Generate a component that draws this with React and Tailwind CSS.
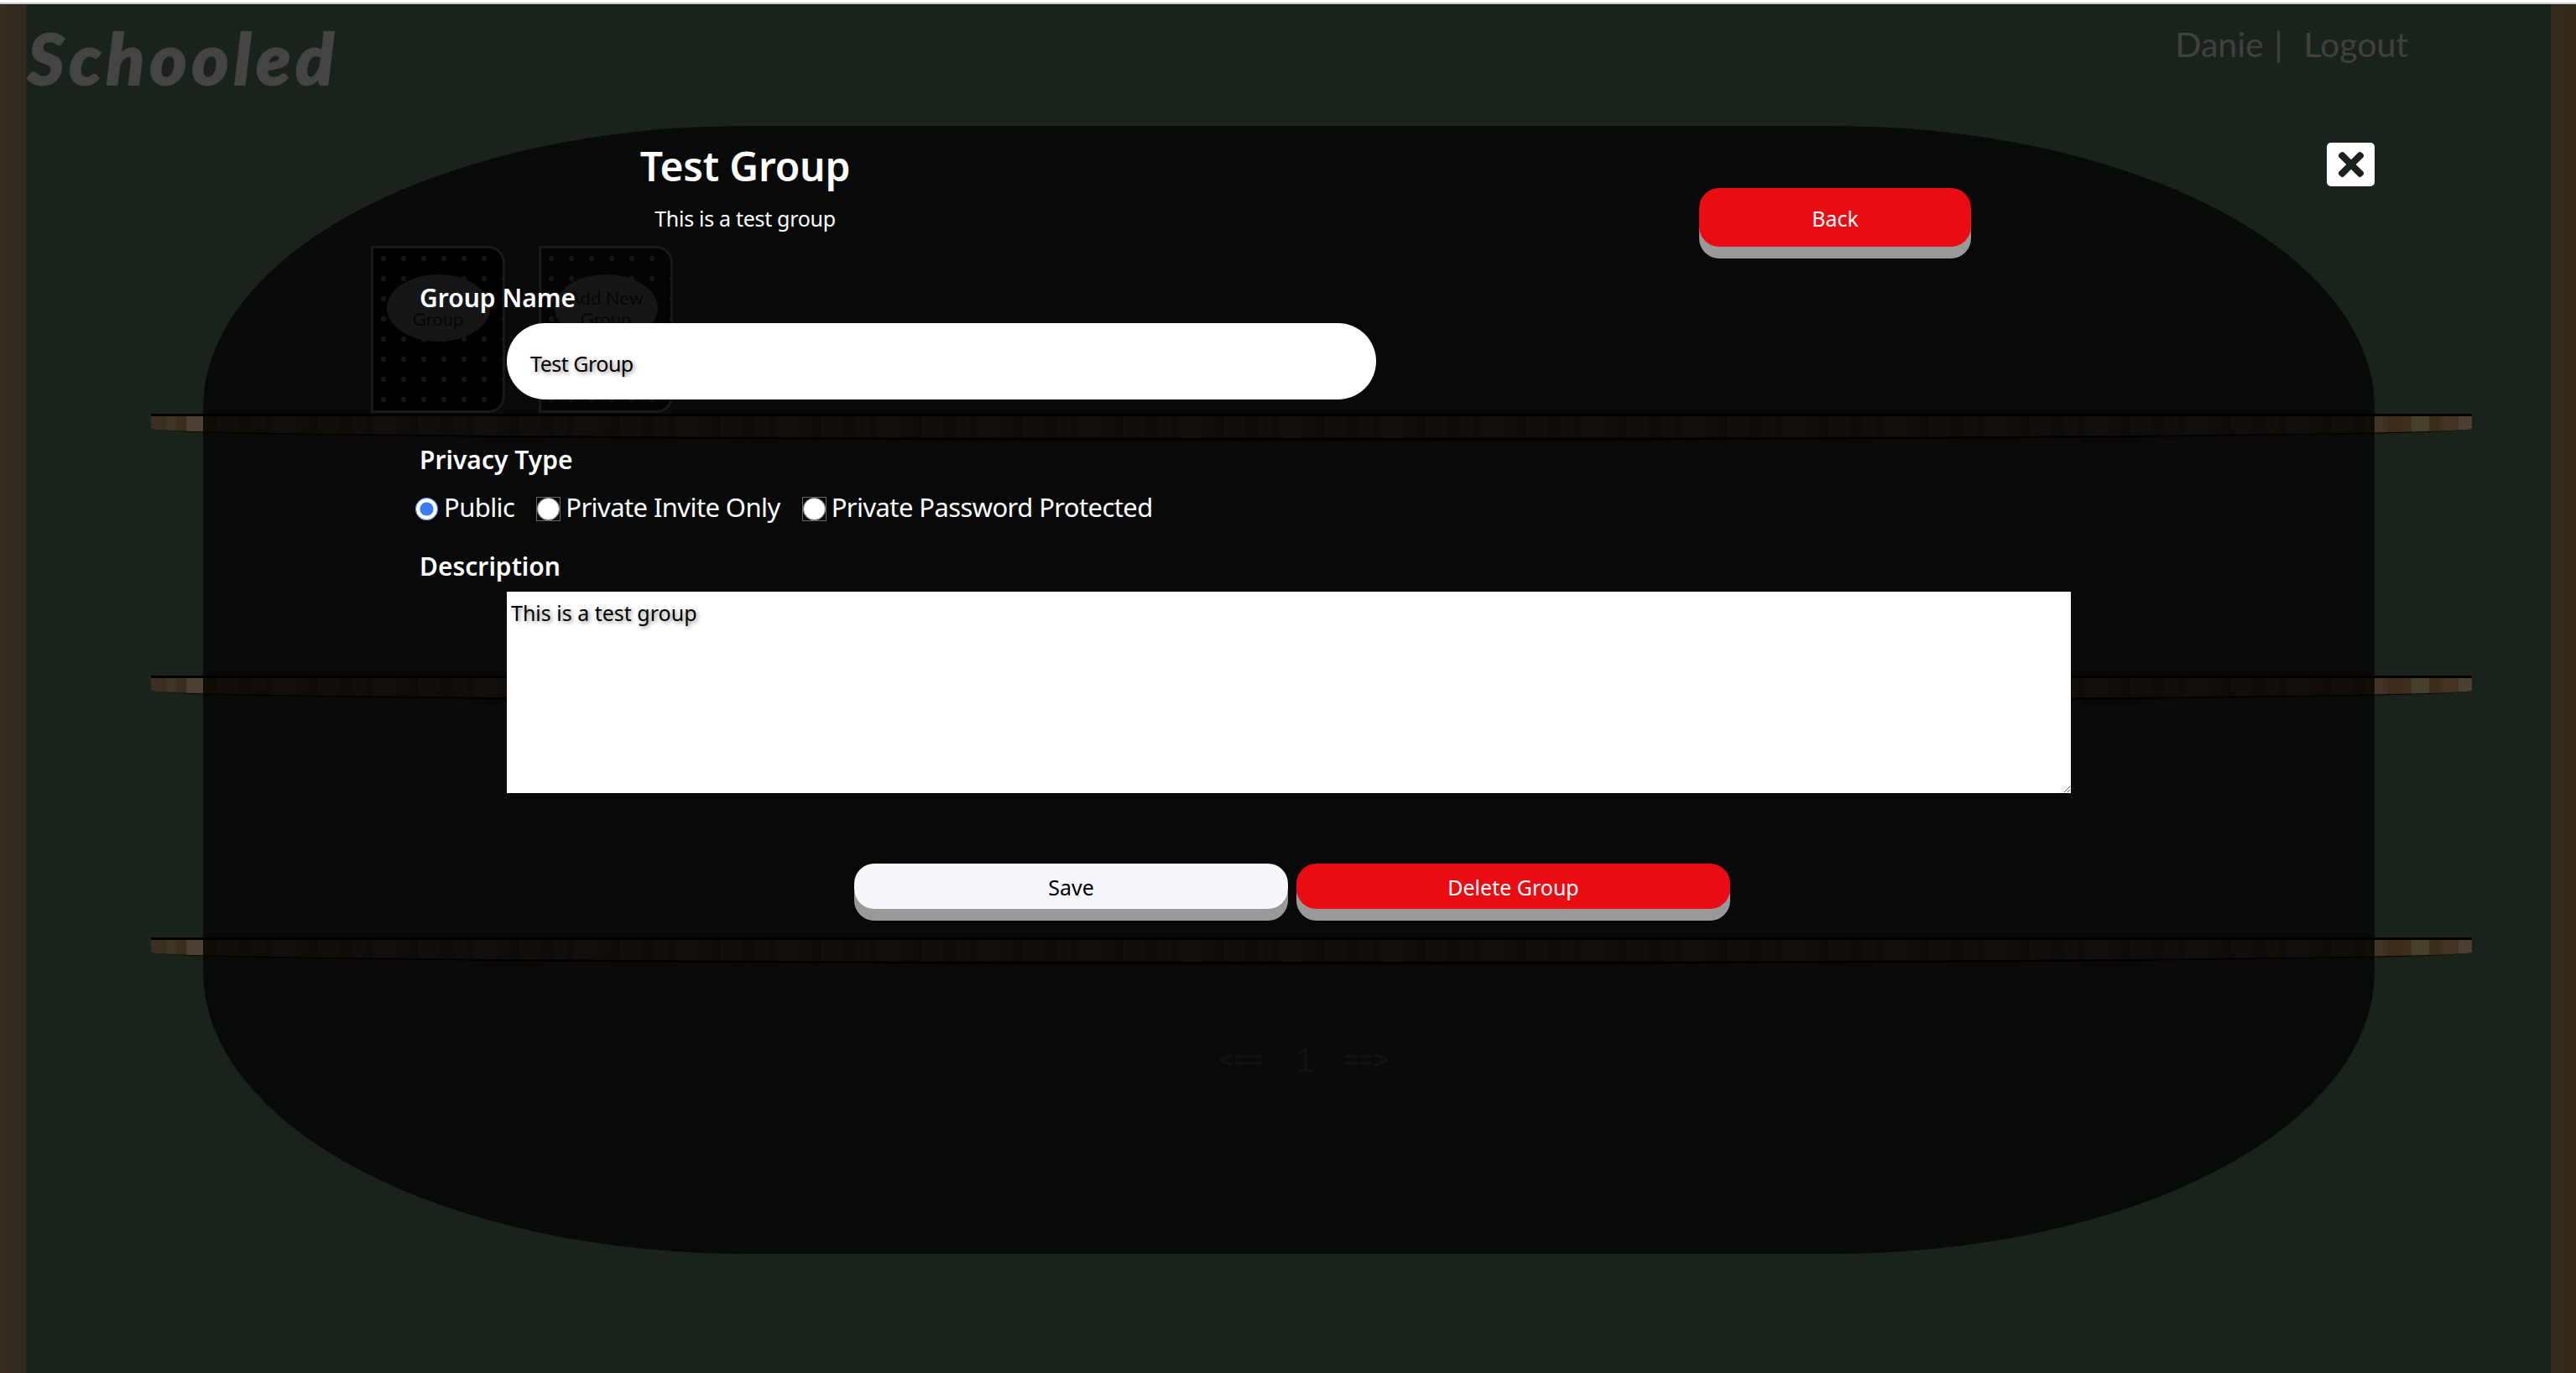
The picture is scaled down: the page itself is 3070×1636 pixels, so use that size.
import { FaTimes } from "react-icons/fa";

const ui = "font-['Noto_Sans','Open_Sans',sans-serif]";
const comic = "font-['Comic_Sans_MS','Lato','DejaVu_Sans',sans-serif]";

function Shelf({ className = "" }) {
  return (
    <div
      className={`ml-[149px] w-[2766px] h-[32px] shrink-0 border-t-[3px] border-b-[3px] border-black rounded-[0_0_50%_50%_/_0_0_14px_14px] bg-[linear-gradient(90deg,#3b2f21_0,#3b2f21_18px,#3f3324_18px,#3f3324_30px,#3a2d1d_30px,#3a2d1d_42px,#4a4033_42px,#4a4033_62px,transparent_62px,transparent_2650px,#403426_2650px,#3f3122_2666px,#3b2c1a_2666px,#3d3020_2694px,#47402f_2694px,#47402f_2715px,#3c2d17_2715px,#3c2d17_2728px,#40331f_2728px,#40331f_2750px,#4a3f30_2750px,#4a3f30_2766px),repeating-linear-gradient(90deg,#3a2f22_0,#3a2f22_17px,#322719_17px,#322719_24px,#3c3126_24px,#3c3126_51px,#382c1e_51px,#382c1e_66px,#30261a_66px,#30261a_78px,#3a3024_78px,#3a3024_103px,#35291b_103px,#35291b_120px)] ${className}`}
    />
  );
}

function Card({ lines, tone }) {
  return (
    <div
      className={`w-[160px] h-[199px] border-[3px] border-[#555555] rounded-r-[20px] ${tone} bg-[radial-gradient(circle,#464646_3px,transparent_3.5px)] bg-[length:24px_24px] pt-[31px] flex justify-center`}
    >
      <div className="w-[123px] h-[80px] rounded-[50%] bg-[#4a4a4a] flex flex-col items-center justify-center text-[22px] leading-[25px] text-[#141414]">
        {lines.map((l, i) => (
          <span key={i} className="h-[25px]">{l}</span>
        ))}
      </div>
    </div>
  );
}

function Radio({ label, checked, className = "" }) {
  return (
    <label className={`flex items-center h-[28px] ${className}`}>
      <input
        type="radio"
        name="privacy"
        defaultChecked={checked}
        className={`w-[27px] h-[27px] m-0 shrink-0 rounded-full accent-[#3b7cf6] ${checked ? "" : "shadow-[0_0_0_1px_#666666]"}`}
      />
      <span className="ml-[7px] pb-[4px] text-[31px] leading-[28px] tracking-[-0.6px] text-white whitespace-nowrap">{label}</span>
    </label>
  );
}

function PushButton({ children, className = "" }) {
  return (
    <button
      type="button"
      className={`rounded-[24px] shadow-[0_14px_0_#999999] pt-[3px] text-[25px] ${className}`}
    >
      {children}
    </button>
  );
}

export default function App() {
  return (
    <div className={`relative w-[3070px] h-[1636px] overflow-hidden bg-[#1a231b] flex flex-col ${ui}`}>
      <div className="h-[3px] bg-white shrink-0" />
      <div className="h-[2px] bg-[#cccccc] shrink-0" />
      <div className="flex-1 flex min-h-0">
        <div className="w-[31px] bg-[linear-gradient(90deg,#352c20,#32291c_50%,#32291c_85%,#35281a)]" />
        <div className={`w-[3009px] flex flex-col ${comic}`}>
          <div className="h-[288px] shrink-0 flex justify-between items-start">
            <div className="pl-[2px] pt-[20px] text-[84px] leading-[88px] font-black italic tracking-[6px] text-[#444444] [-webkit-text-stroke:2px_#444444] font-['Lato',sans-serif]">
              Schooled
            </div>
            <div className="mr-[170px] pt-[21px] text-[41px] leading-[54px] text-[#404040] whitespace-pre [word-spacing:2px]">
              Danie |  Logout
            </div>
          </div>
          <div className="ml-[411px] flex gap-[40px] h-[200px] shrink-0">
            <Card lines={["", "Group"]} tone="bg-black" />
            <Card lines={["Add New", "Group"]} tone="bg-[#0a100a]" />
          </div>
          <Shelf />
          <div className="h-[280px] shrink-0" />
          <Shelf />
          <div className="h-[280px] shrink-0" />
          <Shelf />
          <div className="mt-[90px] ml-[1422px] flex items-center text-[40px] leading-[48px] text-[#3a3a3a] font-['Liberation_Sans',sans-serif]">
            <span className="w-[53px] text-[30px] font-bold">{"<=="}</span>
            <span className="ml-[38px] w-[22px]">1</span>
            <span className="ml-[36px] w-[53px] text-[30px] font-bold">{"==>"}</span>
          </div>
        </div>
        <div className="w-[30px] bg-[linear-gradient(90deg,#35291c,#33291d_50%,#2f2717)]" />
      </div>

      <div className="absolute left-[242px] top-[150px] w-[2588px] h-[1344px] rounded-[25%] bg-[rgba(0,0,0,0.7)] pt-[18px] flex flex-col">
        <button
          type="button"
          className="absolute right-0 top-[20px] w-[57px] h-[52px] bg-white rounded-[5px] flex items-center justify-center text-[#1a231b]"
        >
          <FaTimes className="w-[44px] h-[44px]" />
        </button>

        <div className="flex ml-[258px] h-[110px]">
          <div className="w-[776px] flex flex-col items-center">
            <h1 className="text-[48px] leading-[60px] font-semibold tracking-[-0.2px] text-white">Test Group</h1>
            <p className="mt-[14px] text-[25px] leading-[36px] tracking-[-0.3px] text-white">This is a test group</p>
          </div>
          <PushButton className="ml-[749px] mt-[56px] w-[324px] h-[70px] bg-[#eb0b13] text-white">
            Back
          </PushButton>
        </div>

        <label className="mt-[57px] ml-[258px] h-[40px] text-[30px] leading-[40px] font-semibold text-white">
          Group Name
        </label>
        <input
          readOnly
          value="Test Group"
          className="mt-[10px] ml-[362px] w-[1036px] h-[91px] rounded-[46px] bg-white px-[28px] pt-[4px] text-[25px] tracking-[-0.5px] text-black [text-shadow:2px_2px_5px_rgba(0,0,0,0.45)] outline-none"
        />

        <div className="mt-[52px] ml-[258px] h-[40px] text-[30px] leading-[40px] font-semibold text-white">
          Privacy Type
        </div>
        <div className="mt-[24px] ml-[253px] flex">
          <Radio label="Public" checked />
          <Radio label="Private Invite Only" className="ml-[27px]" />
          <Radio label="Private Password Protected" className="ml-[27px]" />
        </div>

        <div className="mt-[35px] ml-[258px] h-[40px] text-[30px] leading-[40px] font-semibold text-white">
          Description
        </div>
        <textarea
          readOnly
          defaultValue="This is a test group"
          className="mt-[10px] ml-[362px] w-[1864px] h-[240px] shrink-0 bg-white resize px-[5px] py-[10px] text-[25px] leading-[30px] text-black [text-shadow:2px_2px_5px_rgba(0,0,0,0.45)] outline-none"
        />

        <div className="mt-[84px] ml-[776px] flex gap-[10px]">
          <PushButton className="w-[517px] h-[54px] bg-[#f6f8fd] text-black">Save</PushButton>
          <PushButton className="w-[517px] h-[54px] bg-[#eb0b13] text-white">Delete Group</PushButton>
        </div>
      </div>
    </div>
  );
}
